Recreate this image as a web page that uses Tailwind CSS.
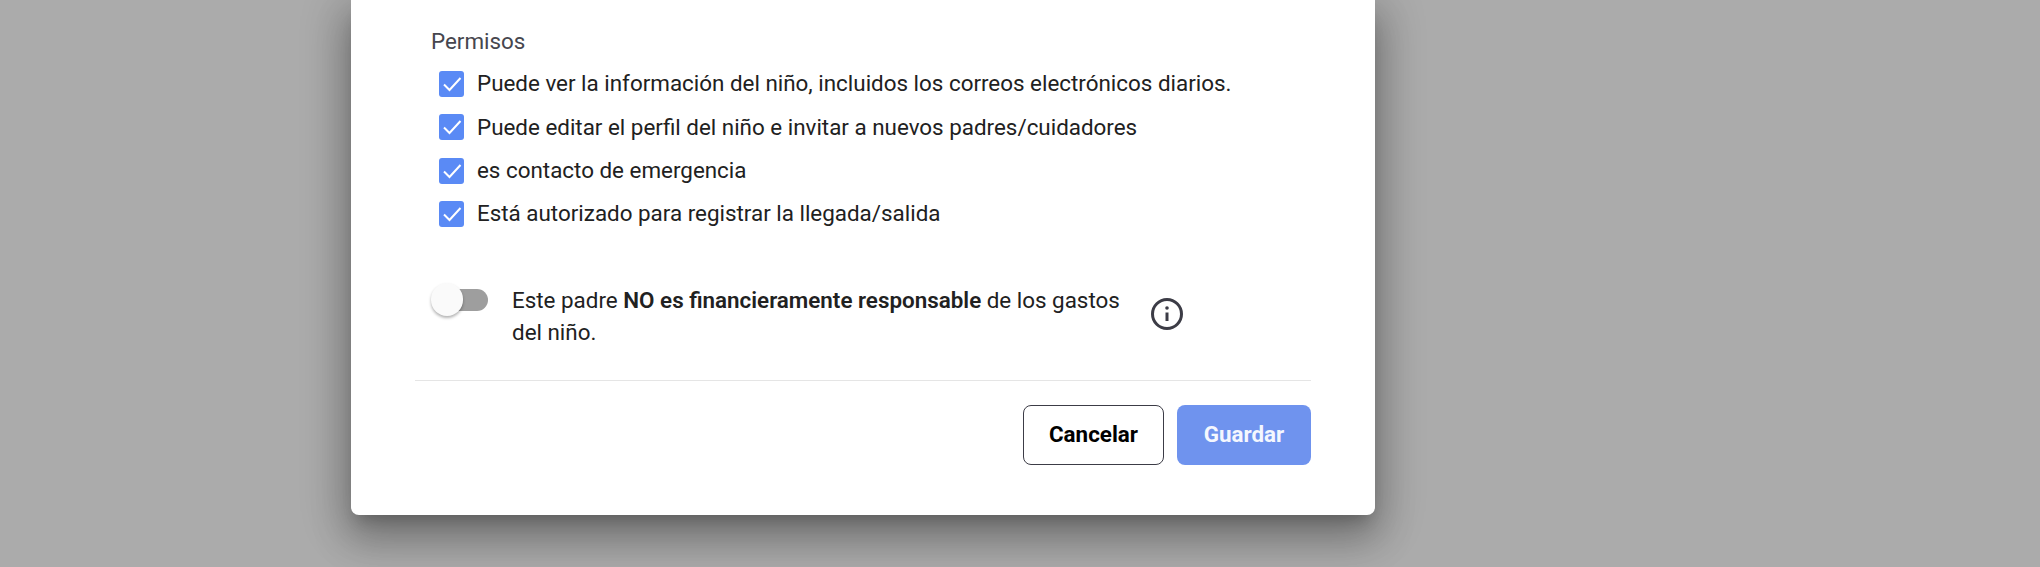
<!DOCTYPE html>
<html lang="es">
<head>
  <meta charset="utf-8" />
  <meta name="viewport" content="width=device-width, initial-scale=1.0" />
  <title>Permisos</title>
  <script src="https://cdn.jsdelivr.net/npm/@tailwindcss/browser@4"></script>
</head>
<body class="bg-[#ababab] font-['Roboto',sans-serif] overflow-hidden">
  <div class="h-[567px] pl-[351px]">
    <!-- modal, top is scrolled out of view -->
    <div class="w-[1024px] h-[515px] bg-white rounded-b-lg shadow-[0_11px_15px_-7px_rgba(0,0,0,0.2),0_24px_38px_3px_rgba(0,0,0,0.2),0_9px_46px_8px_rgba(0,0,0,0.2)] pt-[27px] pl-16 pr-16">
      <div class="pl-4 text-[22.4px] leading-7 text-[#46464e]">Permisos</div>

      <ul class="mt-[16px] pl-[24px] flex flex-col gap-[17.3px] text-[22.4px] text-[#212121]">
        <li class="flex items-center h-[26px] gap-[13px]">
          <svg class="w-[25px] h-[26px] shrink-0 rounded-[3px] bg-[#5a8af5]" viewBox="0 0 25 26" fill="none" stroke="white" stroke-width="2"><path d="M5 13.5 L10.5 19 L21.5 7" /></svg>
          <span>Puede ver la información del niño, incluidos los correos electrónicos diarios.</span>
        </li>
        <li class="flex items-center h-[26px] gap-[13px]">
          <svg class="w-[25px] h-[26px] shrink-0 rounded-[3px] bg-[#5a8af5]" viewBox="0 0 25 26" fill="none" stroke="white" stroke-width="2"><path d="M5 13.5 L10.5 19 L21.5 7" /></svg>
          <span>Puede editar el perfil del niño e invitar a nuevos padres/cuidadores</span>
        </li>
        <li class="flex items-center h-[26px] gap-[13px]">
          <svg class="w-[25px] h-[26px] shrink-0 rounded-[3px] bg-[#5a8af5]" viewBox="0 0 25 26" fill="none" stroke="white" stroke-width="2"><path d="M5 13.5 L10.5 19 L21.5 7" /></svg>
          <span>es contacto de emergencia</span>
        </li>
        <li class="flex items-center h-[26px] gap-[13px]">
          <svg class="w-[25px] h-[26px] shrink-0 rounded-[3px] bg-[#5a8af5]" viewBox="0 0 25 26" fill="none" stroke="white" stroke-width="2"><path d="M5 13.5 L10.5 19 L21.5 7" /></svg>
          <span>Está autorizado para registrar la llegada/salida</span>
        </li>
      </ul>

      <div class="mt-[56px] pl-4 flex items-start">
        <!-- switch -->
        <div class="relative w-[57px] h-[33px] shrink-0">
          <div class="absolute left-[4px] right-0 top-[6px] h-[22px] rounded-full bg-[#9e9e9e]"></div>
          <div class="absolute left-0 top-0 w-[32px] h-[33px] rounded-full bg-[#fafafa] shadow-[0_2px_3px_rgba(0,0,0,0.3)]"></div>
        </div>
        <p class="ml-[24px] mt-[1px] w-[620px] text-[22.4px] leading-8 text-[#212121]">Este padre <b class="font-semibold">NO es financieramente responsable</b> de los gastos del niño.</p>
        <svg class="ml-[19px] mt-[15px] w-8 h-8 shrink-0" viewBox="0 0 32 32" fill="none" stroke="#3c3c46">
          <circle cx="16" cy="16" r="14.5" stroke-width="3" />
          <path d="M16 14.5 V23" stroke-width="3" />
          <circle cx="16" cy="10" r="1.8" fill="#3c3c46" stroke="none" />
        </svg>
      </div>

      <div class="mt-[32px] border-t border-[#e5e5e5] pt-6 flex justify-end gap-[13px]">
        <button class="w-[141px] h-[60px] rounded-lg border border-[#3c3c46] bg-white text-[22.4px] font-bold text-black">Cancelar</button>
        <button class="w-[134px] h-[60px] rounded-lg bg-[#6f93ee] text-[22.4px] font-bold text-[#f4f7fe]">Guardar</button>
      </div>
    </div>
  </div>
</body>
</html>
